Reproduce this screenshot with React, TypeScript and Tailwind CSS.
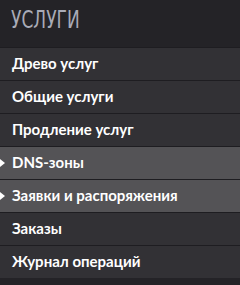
const items = [
  { label: 'Древо услуг' },
  { label: 'Общие услуги' },
  { label: 'Продление услуг' },
  { label: 'DNS-зоны', active: true },
  { label: 'Заявки и распоряжения', active: true },
  { label: 'Заказы' },
  { label: 'Журнал операций' },
];

export default function App() {
  return (
    <div className="w-[240px] h-[285px] bg-[#242327] overflow-hidden">
      <div className="h-[47px] flex items-center pl-[11px] pb-[7px]">
        <span className="inline-block text-[24px] leading-none text-[#a9abb7] uppercase font-['DejaVu_Sans_Condensed','Liberation_Sans_Narrow',sans-serif] scale-x-[0.79] origin-left">
          Услуги
        </span>
      </div>
      <ul>
        {items.map(item => (
          <li
            key={item.label}
            className={`relative h-[33px] border-t border-[#1e1d21] flex items-center pl-3 pb-[2px] ${item.active ? 'bg-[#545356]' : 'bg-[#323135]'}`}
          >
            {item.active && (
              <span className="absolute left-0 top-1/2 -translate-y-1/2 w-0 h-0 border-y-[4px] border-y-transparent border-l-[5px] border-l-white" />
            )}
            <span className="text-[15px] leading-none font-bold text-white font-['Lato',sans-serif]">{item.label}</span>
          </li>
        ))}
      </ul>
    </div>
  );
}
